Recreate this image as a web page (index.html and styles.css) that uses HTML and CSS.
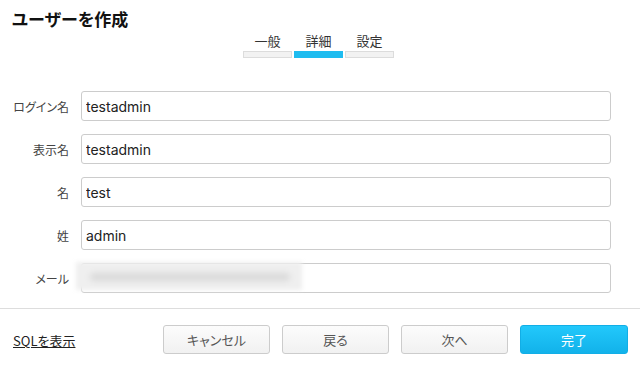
FILE: index.html
```html
<!DOCTYPE html>
<html lang="ja">
	<head>
		<meta charset="utf-8">
		<title>ユーザーを作成</title>
		<link rel="stylesheet" href="styles.css">
	</head>
	<body>
		<div class = "dialog">
			<h1>ユーザーを作成</h1>

			<!--Wizard steps-->
			<div class = "steps">
				<div class = "step">
					<span>一般</span>
					<div class = "bar"></div>
				</div>
				<div class = "step active">
					<span>詳細</span>
					<div class = "bar"></div>
				</div>
				<div class = "step">
					<span>設定</span>
					<div class = "bar"></div>
				</div>
			</div>

			<!--Fields-->
			<div class = "fields">
				<div class = "row">
					<label>ログイン名</label>
					<input type = "text" value = "testadmin">
				</div>
				<div class = "row">
					<label>表示名</label>
					<input type = "text" value = "testadmin">
				</div>
				<div class = "row">
					<label>名</label>
					<input type = "text" value = "test">
				</div>
				<div class = "row">
					<label>姓</label>
					<input type = "text" value = "admin">
				</div>
				<div class = "row">
					<label>メール</label>
					<div class = "mailBox">
						<input type = "text" value = "">
						<div class = "blur"><div class = "blurText"></div></div>
					</div>
				</div>
			</div>

			<div class = "footer">
				<a href = "#" class = "sql">SQLを表示</a>
				<div class = "buttons">
					<button>キャンセル</button>
					<button>戻る</button>
					<button>次へ</button>
					<button class = "primary">完了</button>
				</div>
			</div>
		</div>
	</body>
</html>
```

FILE: styles.css
```css
body {
	margin: 0;
	font-family: 'Inter', 'Noto Sans CJK JP', sans-serif;
	font-feature-settings: "palt";
	background-color: #ffffff;
	color: #222222;
}

.dialog {
	width: 640px;
	height: 366px;
	overflow: hidden;
}

h1 {
	margin: 0;
	padding: 8px 12px 0 12px;
	font-family: 'Noto Sans CJK JP', sans-serif;
	font-size: 17px;
	font-weight: bold;
	line-height: 22px;
	color: #111111;
}

/*Steps*/
.steps {
	display: flex;
	justify-content: center;
	gap: 2px;
	margin-top: 2px;
	padding-right: 3px;
}

.step {
	width: 49px;
	text-align: center;
}

.step span {
	display: block;
	font-family: 'Noto Sans CJK JP', sans-serif;
	font-size: 13px;
	line-height: 18px;
	color: #333333;
	font-feature-settings: normal;
}

.bar {
	height: 5px;
	margin-top: 1px;
	background-color: #f2f2f2;
	border: 1px solid #dcdcdc;
}

.step.active .bar {
	background-color: #1ebcf0;
	border-color: #1ebcf0;
}

/*Fields*/
.fields {
	display: flex;
	flex-direction: column;
	gap: 13px;
	margin-top: 33px;
	padding-right: 29px;
}

.row {
	display: flex;
	align-items: center;
}

.row label {
	width: 69px;
	margin-right: 12px;
	text-align: right;
	font-family: 'Noto Sans CJK JP', sans-serif;
	font-size: 12px;
	color: #444444;
}

.row input {
	flex: 1;
	height: 30px;
	box-sizing: border-box;
	padding: 0 4px;
	border: 1px solid #cccccc;
	border-radius: 3px;
	font-family: 'Inter', sans-serif;
	font-size: 14px;
	color: #222222;
	background-color: #ffffff;
}

.mailBox {
	flex: 1;
	display: flex;
	position: relative;
}

.blur {
	position: absolute;
	left: -5px;
	top: -1px;
	width: 226px;
	height: 28px;
	background-color: #efefef;
	filter: blur(2px);
}

.blurText {
	margin: 11px 0 0 14px;
	width: 200px;
	height: 8px;
	border-radius: 4px;
	background-color: #dadada;
	filter: blur(2px);
}

/*Footer*/
.footer {
	display: flex;
	align-items: center;
	justify-content: space-between;
	margin-top: 15px;
	padding: 16px 12px 0 13px;
	border-top: 1px solid #dddddd;
}

.sql {
	font-family: 'Noto Sans CJK JP', sans-serif;
	font-size: 13px;
	color: #222222;
	text-decoration: underline;
	margin-top: 2px;
}

.buttons {
	display: flex;
	gap: 12px;
}

button {
	width: 107px;
	height: 29px;
	border: 1px solid #cccccc;
	border-radius: 3px;
	background: linear-gradient(#fcfcfc, #f1f1f1);
	font-family: 'Noto Sans CJK JP', sans-serif;
	font-feature-settings: "palt";
	font-size: 13px;
	color: #555555;
}

button.primary {
	width: 108px;
	border-color: #12aee6;
	background: linear-gradient(#22c8fb, #12b2ea);
	color: #ffffff;
}
```
